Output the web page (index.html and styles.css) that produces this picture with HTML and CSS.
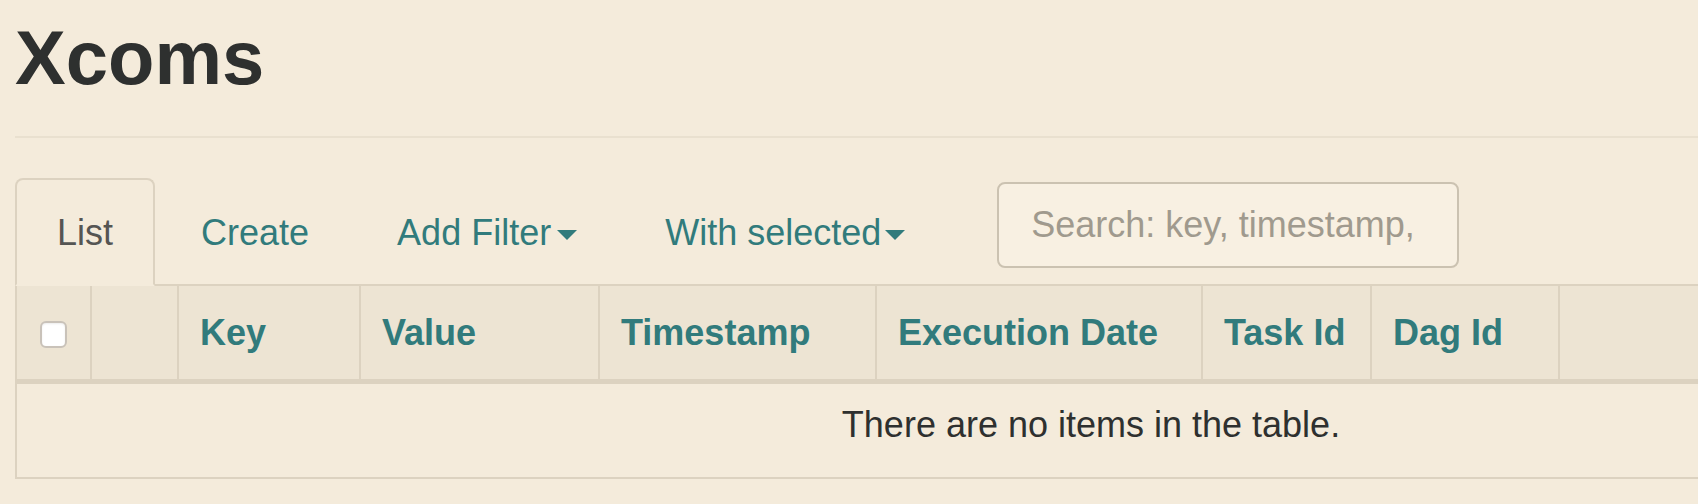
FILE: index.html
```html
<!DOCTYPE html>
<html>
<head>
<meta charset="utf-8">
<title>Xcoms</title>
<link rel="stylesheet" href="styles.css">
</head>
<body>
<div class="container">
  <h2 class="title">Xcoms</h2>
  <hr class="rule">
  <ul class="nav">
    <li class="tab active"><a>List</a></li>
    <li class="tab"><a>Create</a></li>
    <li class="tab"><a>Add Filter<span class="caret"></span></a></li>
    <li class="tab"><a>With selected<span class="caret tight"></span></a></li>
    <li class="search-item"><input class="search" type="text" placeholder="Search: key, timestamp,"></li>
  </ul>
  <table class="grid">
    <thead>
      <tr>
        <th class="c-check"><input class="check" type="checkbox"></th>
        <th class="c-act"></th>
        <th class="c-key">Key</th>
        <th class="c-val">Value</th>
        <th class="c-ts">Timestamp</th>
        <th class="c-ed">Execution Date</th>
        <th class="c-task">Task Id</th>
        <th class="c-dag">Dag Id</th>
        <th class="c-rest"></th>
      </tr>
    </thead>
    <tbody>
      <tr>
        <td class="empty" colspan="9">There are no items in the table.</td>
      </tr>
    </tbody>
  </table>
</div>
</body>
</html>
```
FILE: styles.css
```css
html, body {
  margin: 0;
  padding: 0;
}
body {
  background: #f4ebdb;
  font-family: "Liberation Sans", Arial, sans-serif;
  color: #2e302f;
  overflow: hidden;
  width: 1698px;
  height: 504px;
}
.container {
  width: 2200px;
  padding-left: 15px;
}
.title {
  margin: 0;
  padding-top: 16px;
  font-size: 76px;
  line-height: 84px;
  font-weight: 700;
  color: #2e302f;
}
.rule {
  margin: 36px 0 0 0;
  border: 0;
  border-top: 2px solid #e9e0cf;
  height: 0;
}
.nav {
  list-style: none;
  margin: 40px 0 0 0;
  padding: 0;
  display: flex;
  align-items: flex-end;
  border-bottom: 2px solid #dcd2c0;
  width: 2150px;
}
.tab {
  margin-right: 4px;
  margin-bottom: -2px;
}
.tab a {
  display: block;
  font-size: 36px;
  line-height: 50px;
  padding: 28px 40px 26px 40px;
  border: 2px solid transparent;
  border-radius: 8px 8px 0 0;
  color: #317b7c;
  white-space: nowrap;
}
.tab.active a {
  color: #555553;
  background: #f4ebdb;
  border-color: #dcd2c0;
  border-bottom-color: #f4ebdb;
}
.caret {
  display: inline-block;
  width: 0;
  height: 0;
  margin-left: 6px;
  vertical-align: middle;
  border-top: 10px solid #317b7c;
  border-left: 10px solid transparent;
  border-right: 10px solid transparent;
}
.caret.tight {
  margin-left: 4px;
}
.search-item {
  margin-left: 46px;
  margin-bottom: 16px;
}
.search {
  box-sizing: border-box;
  width: 462px;
  height: 86px;
  border: 2px solid #cbc2b1;
  border-radius: 8px;
  background: #f8f0e2;
  padding: 0 20px 0 32px;
  font-family: "Liberation Sans", Arial, sans-serif;
  font-size: 36px;
  color: #555;
  outline: none;
}
.search::placeholder {
  color: #a09a8e;
}
.grid {
  border-collapse: separate;
  border-spacing: 0;
  table-layout: fixed;
  width: 2150px;
  border-left: 2px solid #dcd2c0;
  border-bottom: 2px solid #dcd2c0;
}
.grid th {
  box-sizing: border-box;
  background: #ede4d3;
  height: 98px;
  padding: 0 0 0 21px;
  border-right: 2px solid #dcd2c0;
  border-bottom: 5px solid #dcd2c0;
  text-align: left;
  vertical-align: middle;
  font-size: 36px;
  line-height: 50px;
  font-weight: 700;
  color: #317b7c;
  white-space: nowrap;
}
.grid th.c-check {
  width: 75px;
  padding: 0;
  text-align: center;
}
.c-act { width: 87px; }
.c-key { width: 182px; }
.c-val { width: 239px; }
.c-ts { width: 277px; }
.c-ed { width: 326px; }
.c-task { width: 169px; }
.c-dag { width: 188px; }
.grid th.c-rest { border-right: 0; }
.check {
  -webkit-appearance: none;
  appearance: none;
  box-sizing: border-box;
  width: 27px;
  height: 27px;
  margin: 0;
  border: 2px solid #c9c2b9;
  border-radius: 6px;
  background: #ffffff;
  box-shadow: inset 0 1px 2px rgba(0,0,0,0.08);
  vertical-align: middle;
  display: inline-block;
}
.empty {
  padding: 16px 0 27px 0;
  text-align: center;
  font-size: 36px;
  line-height: 50px;
  color: #2e302f;
  background: #f4ebdb;
}
```
